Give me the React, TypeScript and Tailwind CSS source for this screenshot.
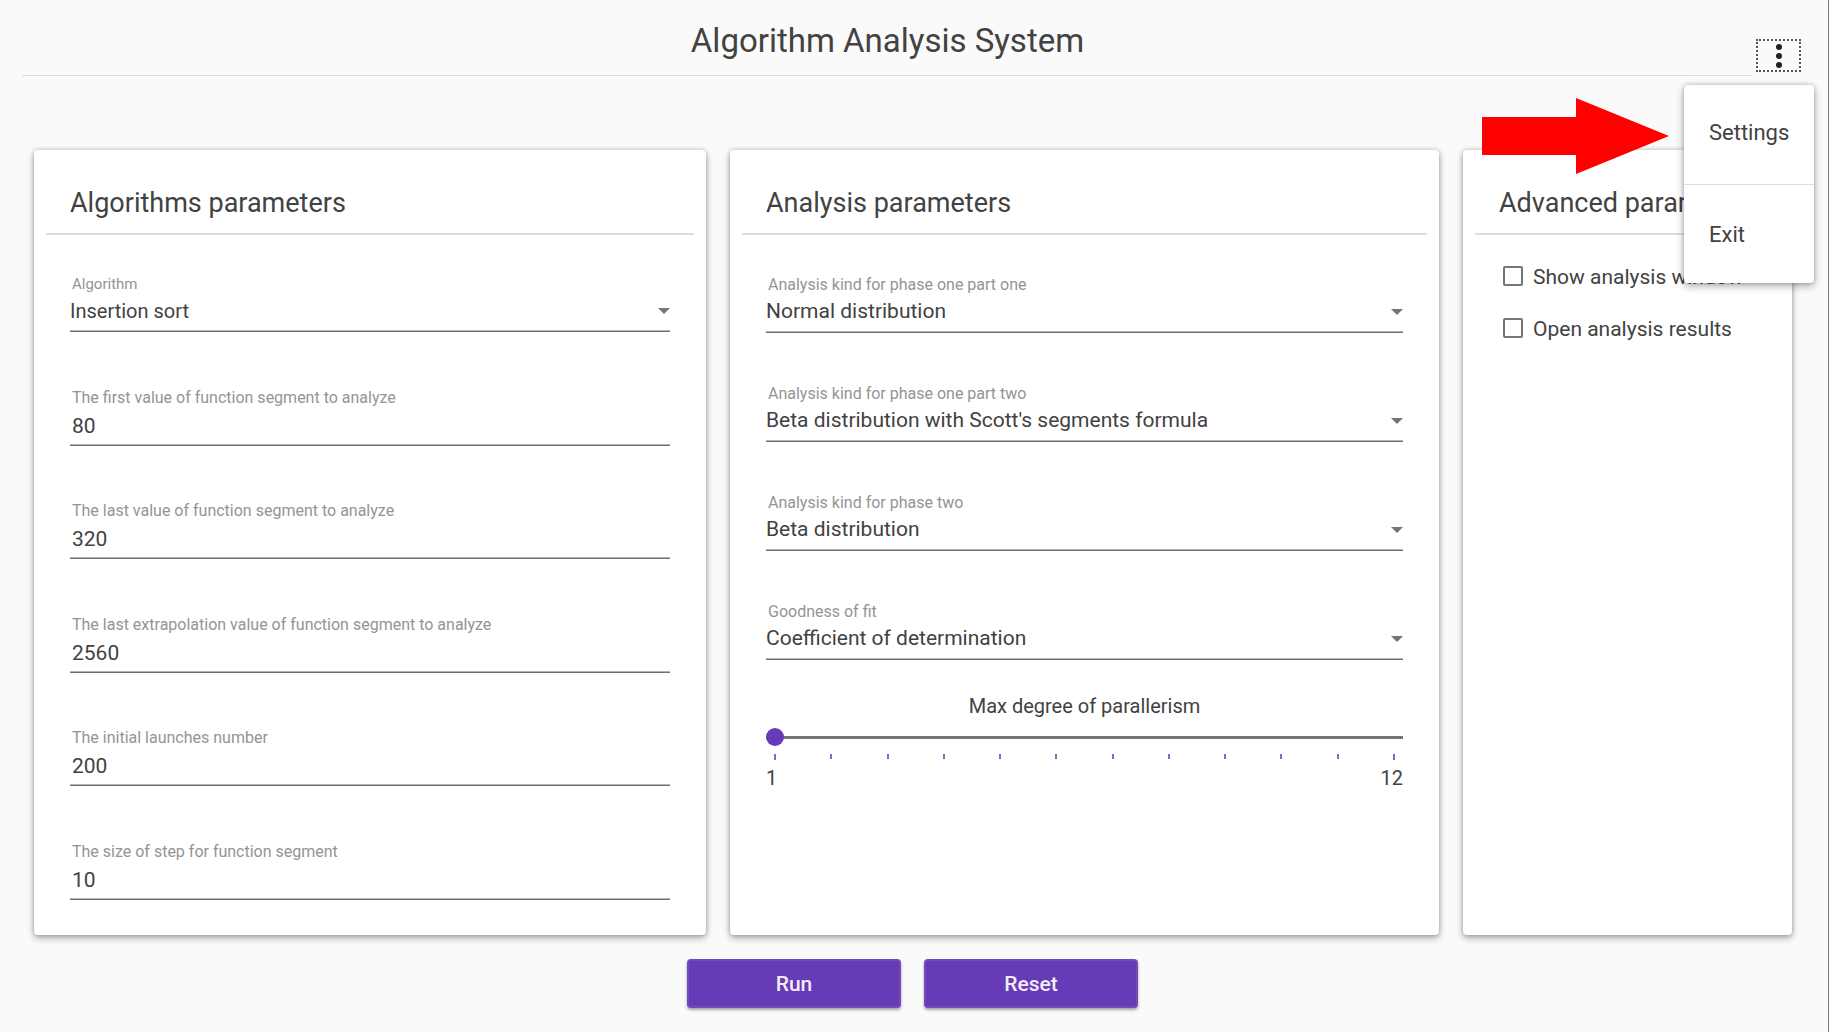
import { useState } from "react";

const underline =
  "border-t border-b border-t-[#b4b4b4] border-b-[#6f6f6f]";

type FieldProps = { id: string; label: string; value: string; compact?: boolean };

function SelectField({ id, label, value, compact }: FieldProps) {
  return (
    <div className="flex flex-col">
      <label
        htmlFor={id}
        className={`pl-0.5 leading-5 text-[#949494] ${compact ? "text-[15px]" : "text-base"}`}
      >
        {label}
      </label>
      <div className="flex h-9 items-center pb-0.5">
        <select
          id={id}
          defaultValue={value}
          className={`h-8 min-w-0 flex-1 appearance-none bg-transparent text-[#424242] outline-none ${compact ? "text-xl" : "text-[21px]"}`}
        >
          <option>{value}</option>
        </select>
        <svg viewBox="0 0 12 6" className="-ml-3 h-1.5 w-3 fill-[#757575]" aria-hidden="true">
          <path d="M0 0h12L6 6z" />
        </svg>
      </div>
      <div className={underline} />
    </div>
  );
}

function NumberField({ id, label, value }: FieldProps) {
  return (
    <div className="flex flex-col">
      <label htmlFor={id} className="pl-0.5 text-base leading-5 text-[#949494]">
        {label}
      </label>
      <input
        id={id}
        type="text"
        inputMode="numeric"
        defaultValue={value}
        className="h-9 w-full bg-transparent px-0.5 text-[21px] text-[#424242] outline-none"
      />
      <div className={underline} />
    </div>
  );
}

function Card({ title, children }: { title: string; children: React.ReactNode }) {
  return (
    <section className="flex min-w-0 flex-col rounded bg-white px-3 pt-8 pb-[35px] shadow-[0_3px_7px_rgba(0,0,0,0.32),0_0_4px_rgba(0,0,0,0.2)]">
      <h2 className="h-[53px] overflow-hidden border-b-2 border-[#dddddd] pl-6 text-[27px] leading-[42px] whitespace-nowrap text-[#424242]">
        {title}
      </h2>
      {children}
    </section>
  );
}

function CheckItem({ label }: { label: string }) {
  return (
    <label className="flex h-[52px] items-center gap-2.5 text-[21px] whitespace-nowrap text-[#424242]">
      <input
        type="checkbox"
        className="size-5 shrink-0 appearance-none rounded-xs border-2 border-[#757575] bg-white checked:bg-[#673ab7]"
      />
      <span className="pt-1">{label}</span>
    </label>
  );
}

const numberFields = [
  { id: "first", label: "The first value of function segment to analyze", value: "80" },
  { id: "last", label: "The last value of function segment to analyze", value: "320" },
  { id: "extrapolation", label: "The last extrapolation value of function segment to analyze", value: "2560" },
  { id: "launches", label: "The initial launches number", value: "200" },
  { id: "step", label: "The size of step for function segment", value: "10" },
];

const analysisFields = [
  { id: "phase-one-one", label: "Analysis kind for phase one part one", value: "Normal distribution" },
  { id: "phase-one-two", label: "Analysis kind for phase one part two", value: "Beta distribution with Scott's segments formula" },
  { id: "phase-two", label: "Analysis kind for phase two", value: "Beta distribution" },
  { id: "goodness", label: "Goodness of fit", value: "Coefficient of determination" },
];

const actionButton =
  "h-[49px] w-[214px] rounded border-2 border-[#7549b8] bg-[#673ab7] pt-0.5 text-[21px] font-medium text-[#f1ecf8] shadow-[0_2px_3px_rgba(0,0,0,0.35)]";

export default function App() {
  const [degree, setDegree] = useState(1);

  return (
    <div className="flex min-h-screen flex-col border-r border-[#7a7a7a] bg-[#fafafa] font-['Roboto',sans-serif]">
      <header className="flex pr-[27px] pl-[22px]">
        <div className="flex-1 border-b border-[#dddddd] pb-2.5">
          <h1 className="pt-4 text-center text-[33px] leading-[49px] text-[#424242]">
            Algorithm Analysis System
          </h1>
        </div>
        <div className="relative z-10 mt-[39px] ml-[3px] h-[33px]">
          <button
            type="button"
            aria-label="Menu"
            aria-haspopup="menu"
            aria-expanded="true"
            className="flex h-[33px] w-[45px] items-center justify-center border-2 border-dotted border-[#555555]"
          >
            <svg viewBox="0 0 6 24" className="h-6 w-1.5 fill-[#212121]" aria-hidden="true">
              <circle cx="3" cy="3" r="3" />
              <circle cx="3" cy="12" r="3" />
              <circle cx="3" cy="21" r="3" />
            </svg>
          </button>
          <div
            role="menu"
            className="absolute top-[46px] -right-[13px] w-[130px] rounded bg-white shadow-[0_3px_8px_rgba(0,0,0,0.32),0_0_4px_rgba(0,0,0,0.2)]"
          >
            <button type="button" role="menuitem" className="block h-[99px] w-full pb-1 pl-[25px] text-left text-[22px] text-[#424242]">
              Settings
            </button>
            <div className="border-t border-[#dddddd]" />
            <button type="button" role="menuitem" className="block h-[98px] w-full pl-[25px] text-left text-[22px] text-[#424242]">
              Exit
            </button>
          </div>
          <svg viewBox="0 0 187 76" className="absolute top-[59px] right-[132px] h-[76px] w-[187px] fill-[#ff0000]" aria-hidden="true">
            <path d="M0 19h94V0l93 38-93 38V57H0z" />
          </svg>
        </div>
      </header>

      <main className="mt-[74px] grid flex-1 grid-cols-[672fr_709fr_329fr] gap-6 pr-9 pl-[34px]">
        <Card title="Algorithms parameters">
          <div className="flex flex-1 flex-col justify-between gap-4 px-6 pt-[39px]">
            <SelectField id="algorithm" label="Algorithm" value="Insertion sort" compact />
            {numberFields.map((f) => (
              <NumberField key={f.id} {...f} />
            ))}
          </div>
        </Card>

        <Card title="Analysis parameters">
          <div className="flex flex-col gap-[51px] px-6 pt-10">
            {analysisFields.map((f) => (
              <SelectField key={f.id} {...f} />
            ))}
          </div>
          <div className="mt-[34px] px-6 text-[#424242]">
            <label htmlFor="degree" className="block text-center text-xl leading-6">
              Max degree of parallerism
            </label>
            <input
              id="degree"
              type="range"
              min={1}
              max={12}
              value={degree}
              onChange={(e) => setDegree(Number(e.target.value))}
              className="mt-2.5 block h-[18px] w-full appearance-none bg-transparent [&::-webkit-slider-runnable-track]:h-[3px] [&::-webkit-slider-runnable-track]:bg-[#757575] [&::-webkit-slider-thumb]:-mt-2 [&::-webkit-slider-thumb]:size-[18px] [&::-webkit-slider-thumb]:appearance-none [&::-webkit-slider-thumb]:rounded-full [&::-webkit-slider-thumb]:bg-[#673ab7]"
            />
            <div className="mt-2 flex justify-between px-2" aria-hidden="true">
              {Array.from({ length: 12 }, (_, i) => (
                <span key={i} className="h-[5px] w-0.5 bg-[#8a66c8] first:h-1.5 last:h-1.5" />
              ))}
            </div>
            <div className="mt-1 flex justify-between text-xl leading-7">
              <span>1</span>
              <span>12</span>
            </div>
          </div>
        </Card>

        <Card title="Advanced parameters">
          <div className="flex flex-col pt-[15px] pl-7">
            <CheckItem label="Show analysis window" />
            <CheckItem label="Open analysis results" />
          </div>
        </Card>
      </main>

      <footer className="flex justify-center gap-[23px] pt-6 pr-[3px] pb-6">
        <button type="button" className={actionButton}>
          Run
        </button>
        <button type="button" className={actionButton}>
          Reset
        </button>
      </footer>
    </div>
  );
}
